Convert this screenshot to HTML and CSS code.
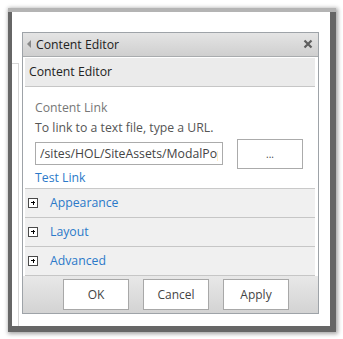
FILE: index.html
```html
<!doctype html>
<html lang="en">
<head>
    <meta charset="UTF-8">
    <title>Content Editor</title>
    <link rel="stylesheet" href="styles.css">
</head>
<body>
    <div class="shot">
        <div class="frame">
            <div class="page-edge"></div>

            <!-- Web part tool pane -->
            <div class="pane">
                <div class="pane-title">
                    <span class="arrow"></span>
                    <span class="pane-name">Content Editor</span>
                    <svg class="close" width="10" height="10" viewBox="0 0 10 10">
                        <path d="M1.5 1.5 L8.5 8.5 M8.5 1.5 L1.5 8.5" stroke="#5f5f5f" stroke-width="2.2"/>
                    </svg>
                </div>

                <div class="pane-body">
                    <div class="part-header">Content Editor</div>

                    <div class="part-fields">
                        <div class="label">Content Link</div>
                        <div class="hint">To link to a text file, type a URL.</div>
                        <div class="link-row">
                            <input type="text" class="link-input" value="/sites/HOL/SiteAssets/ModalPopup.txt">
                            <button class="browse">...</button>
                        </div>
                        <a href="#" class="test-link">Test Link</a>
                    </div>

                    <div class="section"><span class="plus"></span><a href="#">Appearance</a></div>
                    <div class="section"><span class="plus"></span><a href="#">Layout</a></div>
                    <div class="section"><span class="plus"></span><a href="#">Advanced</a></div>
                </div>

                <div class="pane-footer">
                    <button class="btn">OK</button>
                    <button class="btn">Cancel</button>
                    <button class="btn">Apply</button>
                </div>
            </div>
        </div>
    </div>
</body>
</html>
```

FILE: styles.css
```css
* {
    margin: 0;
    padding: 0;
    box-sizing: border-box;
}

body {
    font-family: 'Open Sans', 'Noto Sans', sans-serif;
    font-size: 12px;
    background: #fff;
    color: #444;
    padding: 8px;
}

/* Screenshot frame with drop shadow */
.shot {
    width: 328px;
    height: 324px;
    padding: 0 6px 6px 4px;
    border-top: 4px solid #b4b4b4;
    background: #666;
    box-shadow: 1px 1px 4px 1px rgba(0, 0, 0, 0.35);
}

.frame {
    width: 318px;
    height: 314px;
    background: #fff;
    display: flex;
    padding-top: 20px;
}

.page-edge {
    width: 7px;
    margin-top: 31px;
    border-top: 1px solid #d6d6d6;
    border-right: 1px solid #d6d6d6;
    flex-shrink: 0;
}

.pane {
    margin-left: 3px;
    width: 297px;
    height: 282px;
    border: 1px solid #9ea3a8;
    display: flex;
    flex-direction: column;
}

/* Title bar */
.pane-title {
    height: 24px;
    display: flex;
    align-items: center;
    background: linear-gradient(#e4e4e4, #cfcfcf);
    border-bottom: 1px solid #a9acae;
    padding: 0 5px 0 4px;
    color: #222;
    font-size: 12.25px;
}

.arrow {
    width: 0;
    height: 0;
    border-top: 4px solid transparent;
    border-bottom: 4px solid transparent;
    border-right: 4px solid #888;
    margin-right: 5px;
}

.pane-name {
    flex: 1;
}

.pane-body {
    flex: 1;
    padding: 1px 3px 0 2px;
}

.part-header {
    height: 29px;
    line-height: 28px;
    background: #ebebeb;
    border-bottom: 1px solid #c6c6c6;
    padding-left: 4px;
    font-size: 12.25px;
    color: #222;
}

.part-fields {
    padding: 12px 0 2px 10px;
    border-bottom: 1px solid #c9c9c9;
    height: 102px;
}

.label {
    color: #777;
    font-size: 12.25px;
    line-height: 18px;
}

.hint {
    color: #555;
    font-size: 12.25px;
    line-height: 21px;
}

.link-row {
    display: flex;
    align-items: center;
    margin-top: 1px;
}

.link-input {
    width: 188px;
    height: 23px;
    border: 1px solid #ababab;
    font-family: inherit;
    font-size: 12.25px;
    color: #444;
    padding: 0 4px;
    outline: none;
}

.browse {
    margin-left: 14px;
    width: 66px;
    height: 30px;
    background: #fff;
    border: 1px solid #ababab;
    font-family: inherit;
    font-size: 10px;
    color: #444;
}

.test-link {
    display: block;
    color: #2b79c9;
    text-decoration: none;
    font-size: 12.25px;
    line-height: 18px;
}

/* Collapsed sections */
.section {
    height: 29px;
    display: flex;
    align-items: center;
    background: #f0f0f0;
    border-bottom: 1px solid #c6c6c6;
    padding-left: 3px;
}

.section a {
    color: #2b79c9;
    text-decoration: none;
    font-size: 12.25px;
}

.plus {
    position: relative;
    width: 10px;
    height: 10px;
    border: 1px solid #4a4a4a;
    background: #fff;
    margin-right: 12px;
}

.plus::before,
.plus::after {
    content: "";
    position: absolute;
    background: #000;
}

.plus::before {
    left: 2px;
    top: 3.5px;
    width: 4px;
    height: 1px;
}

.plus::after {
    left: 3.5px;
    top: 2px;
    width: 1px;
    height: 4px;
}

/* Buttons */
.pane-footer {
    height: 38px;
    background: linear-gradient(#e8e8e8, #d3d3d3);
    display: flex;
    justify-content: flex-end;
    align-items: center;
    gap: 14px;
    padding-right: 29px;
}

.btn {
    width: 66px;
    height: 31px;
    background: #fff;
    border: 1px solid #a8a8a8;
    font-family: inherit;
    font-size: 12px;
    color: #444;
}
```
